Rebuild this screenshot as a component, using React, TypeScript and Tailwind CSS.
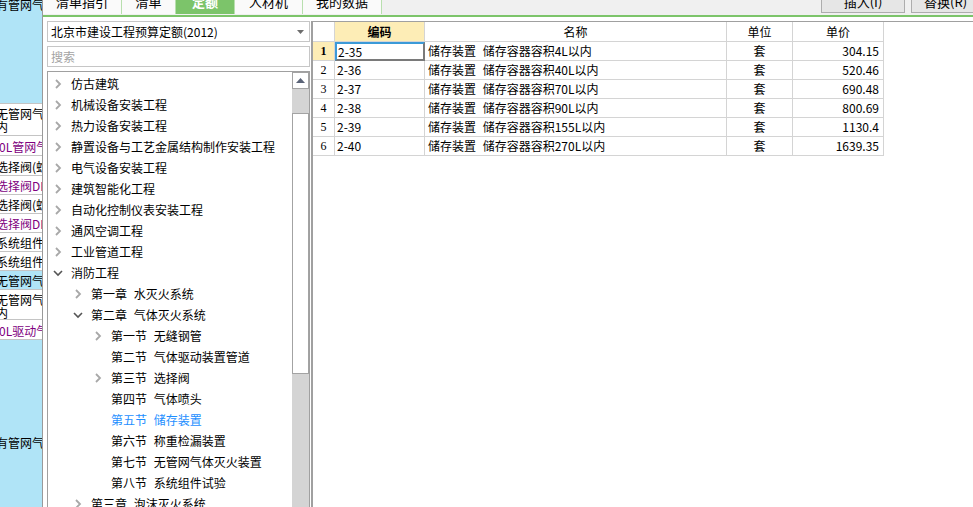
import React from 'react';

type StripRow = { lines: string[]; h: string; purple?: boolean; active?: boolean; shift: string; top?: boolean };

const stripRows: StripRow[] = [
    { lines: ['无管网气', '内'], h: 'h-[33px]', shift: '-ml-[4px]', top: true },
    { lines: ['0L管网气'], h: 'h-[20px]', purple: true, shift: '-ml-[1px]' },
    { lines: ['选择阀(蛇'], h: 'h-[20px]', shift: '-ml-[4px]' },
    { lines: ['选择阀DN'], h: 'h-[19px]', purple: true, shift: '-ml-[4px]' },
    { lines: ['选择阀(蛇'], h: 'h-[19px]', shift: '-ml-[4px]' },
    { lines: ['选择阀DN'], h: 'h-[19px]', purple: true, shift: '-ml-[4px]' },
    { lines: ['系统组件'], h: 'h-[19px]', shift: '-ml-[4px]' },
    { lines: ['系统组件'], h: 'h-[19px]', shift: '-ml-[4px]' },
    { lines: ['无管网气'], h: 'h-[19px]', active: true, shift: '-ml-[4px]' },
    { lines: ['无管网气', '内'], h: 'h-[30px]', shift: '-ml-[4px]', top: true },
    { lines: ['0L驱动气'], h: 'h-[20px]', purple: true, shift: '-ml-[1px]' },
];

type TreeItem = { label: string; level: number; icon: 'right' | 'down' | 'none'; selected?: boolean };

const treeItems: TreeItem[] = [
    { label: '仿古建筑', level: 0, icon: 'right' },
    { label: '机械设备安装工程', level: 0, icon: 'right' },
    { label: '热力设备安装工程', level: 0, icon: 'right' },
    { label: '静置设备与工艺金属结构制作安装工程', level: 0, icon: 'right' },
    { label: '电气设备安装工程', level: 0, icon: 'right' },
    { label: '建筑智能化工程', level: 0, icon: 'right' },
    { label: '自动化控制仪表安装工程', level: 0, icon: 'right' },
    { label: '通风空调工程', level: 0, icon: 'right' },
    { label: '工业管道工程', level: 0, icon: 'right' },
    { label: '消防工程', level: 0, icon: 'down' },
    { label: '第一章 水灭火系统', level: 1, icon: 'right' },
    { label: '第二章 气体灭火系统', level: 1, icon: 'down' },
    { label: '第一节 无缝钢管', level: 2, icon: 'right' },
    { label: '第二节 气体驱动装置管道', level: 2, icon: 'none' },
    { label: '第三节 选择阀', level: 2, icon: 'right' },
    { label: '第四节 气体喷头', level: 2, icon: 'none' },
    { label: '第五节 储存装置', level: 2, icon: 'none', selected: true },
    { label: '第六节 称重检漏装置', level: 2, icon: 'none' },
    { label: '第七节 无管网气体灭火装置', level: 2, icon: 'none' },
    { label: '第八节 系统组件试验', level: 2, icon: 'none' },
    { label: '第三章 泡沫灭火系统', level: 1, icon: 'right' },
];

const levelPad = ['pl-[4px]', 'pl-[24px]', 'pl-[44px]'];

const rows = [
    { no: 1, code: '2-35', name: '储存装置 储存容器容积4L以内', unit: '套', price: '304.15' },
    { no: 2, code: '2-36', name: '储存装置 储存容器容积40L以内', unit: '套', price: '520.46' },
    { no: 3, code: '2-37', name: '储存装置 储存容器容积70L以内', unit: '套', price: '690.48' },
    { no: 4, code: '2-38', name: '储存装置 储存容器容积90L以内', unit: '套', price: '800.69' },
    { no: 5, code: '2-39', name: '储存装置 储存容器容积155L以内', unit: '套', price: '1130.4' },
    { no: 6, code: '2-40', name: '储存装置 储存容器容积270L以内', unit: '套', price: '1639.35' },
];

const tabs = [
    { label: '清单指引', w: 'w-[79px]' },
    { label: '清单', w: 'w-[54px]' },
    { label: '定额', w: 'w-[59px]', active: true },
    { label: '人材机', w: 'w-[68px]' },
    { label: '我的数据', w: 'w-[79px]' },
];

const Chevron: React.FC<{ dir: 'right' | 'down' | 'none' }> = ({ dir }) => {
    if (dir === 'none') return <span className="w-[12px]" />;
    if (dir === 'right') {
        return (
            <svg width="12" height="12" viewBox="0 0 12 12">
                <path d="M4 2 L8 6 L4 10" fill="none" stroke="#a8a8a8" strokeWidth="1.8" />
            </svg>
        );
    }
    return (
        <svg width="12" height="12" viewBox="0 0 12 12">
            <path d="M2 4 L6 8 L10 4" fill="none" stroke="#555555" strokeWidth="1.6" />
        </svg>
    );
};

const LeftStrip: React.FC = () => (
    <div className="w-[43px] shrink-0 h-full flex flex-col bg-[#b0e4f7] border-r border-[#9a9a9a] overflow-hidden">
        <div className="h-[103px] shrink-0 whitespace-nowrap">
            <div className="-ml-[4px] -mt-[2px] leading-[14px]">有管网气</div>
        </div>
        {stripRows.map((r, i) => (
            <div
                key={i}
                className={`${r.h} shrink-0 flex flex-col whitespace-nowrap border-b border-[#c4c4c4] ${r.top ? 'justify-start pt-[4px]' : 'justify-center pt-[2px]'} ${i === 0 ? 'border-t' : ''} ${r.active ? 'bg-[#b0e4f7]' : 'bg-white'} ${r.purple ? 'text-[#800080]' : 'text-black'}`}
            >
                {r.lines.map((l, j) => (
                    <div key={j} className={`${r.shift} leading-[12px] ${j > 0 ? 'mt-[1px]' : ''}`}>{l}</div>
                ))}
            </div>
        ))}
        <div className="flex-1 whitespace-nowrap pt-[96px]">
            <div className="-ml-[4px] leading-[14px]">有管网气</div>
        </div>
    </div>
);

const TopBar: React.FC = () => (
    <div className="h-[17px] shrink-0 flex bg-[#f0f0f0] border-b-2 border-[#7cc46a] overflow-hidden">
        {tabs.map(t => (
            <div
                key={t.label}
                className={`${t.w} shrink-0 h-[24px] -mt-[10px] flex items-center justify-center border-r border-[#b8dfae] text-[13px] ${t.active ? 'bg-[#7cc46a] text-white font-bold' : 'bg-[#fafafa] text-black'}`}
            >
                {t.label}
            </div>
        ))}
        <div className="flex-1" />
        <div className="w-[84px] shrink-0 h-[23px] -mt-[10px] flex items-center justify-center bg-[#e6e6e6] border border-[#adadad] text-[13px]">插入(I)</div>
        <div className="w-[6px] shrink-0" />
        <div className="w-[62px] shrink-0 h-[23px] -mt-[10px] flex items-center justify-start pl-[12px] bg-[#e6e6e6] border border-r-0 border-[#adadad] text-[13px] whitespace-nowrap">替换(R)</div>
    </div>
);

const LeftPanel: React.FC = () => (
    <div className="w-[267px] shrink-0 pl-[4px] pt-[4px] flex flex-col gap-[4px] min-h-0">
        <div className="h-[21px] shrink-0 w-[263px] border border-[#c6c6c6] flex items-center pl-[3px] pr-[5px]">
            <span className="flex-1 whitespace-nowrap">北京市建设工程预算定额(2012)</span>
            <svg width="7" height="4" viewBox="0 0 7 4">
                <path d="M0 0 L7 0 L3.5 4 Z" fill="#6d6d6d" />
            </svg>
        </div>
        <div className="h-[21px] shrink-0 w-[263px] border border-[#c6c6c6] flex items-center pl-[3px] text-[#a3a3a3]">搜索</div>
        <div className="h-[460px] shrink-0 w-[263px] border border-[#a0a0a0] flex">
            <div className="flex-1 pt-[1px] flex flex-col">
                {treeItems.map((it, i) => (
                    <div key={i} className={`h-[21px] shrink-0 flex items-center ${levelPad[it.level]}`}>
                        <span className="w-[12px] flex justify-center">
                            <Chevron dir={it.icon} />
                        </span>
                        <span className={`ml-[7px] whitespace-pre [word-spacing:4px] ${it.selected ? 'text-[#1e8fff]' : 'text-black'}`}>{it.label}</span>
                    </div>
                ))}
            </div>
            <div className="w-[17px] shrink-0 flex flex-col bg-[#d4d4d4]">
                <div className="h-[17px] shrink-0 bg-white border border-[#a3a3a3] flex items-center justify-center">
                    <svg width="9" height="5" viewBox="0 0 9 5">
                        <path d="M0 5 L4.5 0 L9 5 Z" fill="#5b6478" />
                    </svg>
                </div>
                <div className="h-[24px] shrink-0" />
                <div className="h-[261px] shrink-0 bg-white border border-[#a3a3a3]" />
            </div>
        </div>
    </div>
);

const DataTable: React.FC = () => (
    <div className="flex-1 ml-[1px] mt-[4px] border-t border-l-2 border-[#a0a0a0] bg-white">
        <div className="flex h-[20px] border-b border-[#d4d4d4] w-max">
            <div className="w-[22px] border-r border-[#d4d4d4]" />
            <div className="w-[90px] border-r border-[#d4d4d4] bg-[#fdedb6] flex items-center justify-center font-bold">编码</div>
            <div className="w-[302px] border-r border-[#d4d4d4] flex items-center justify-center">名称</div>
            <div className="w-[66px] border-r border-[#d4d4d4] flex items-center justify-center">单位</div>
            <div className="w-[91px] border-r border-[#d4d4d4] flex items-center justify-center">单价</div>
        </div>
        {rows.map(r => {
            const sel = r.no === 1;
            return (
                <div key={r.no} className="flex h-[19px] border-b border-[#d4d4d4] w-max">
                    <div className={`w-[22px] border-r border-[#d4d4d4] flex items-center justify-center font-['Liberation_Serif'] ${sel ? 'bg-[#fdedb6] font-bold' : ''}`}>{r.no}</div>
                    <div className={`w-[90px] flex items-center pl-[1px] ${sel ? 'border-2 border-t-[#3b9ad8] border-l-[#3b9ad8] border-r-[#7a7a7a] border-b-[#7a7a7a] -mb-[1px] h-[19px]' : 'border-r border-[#d4d4d4] pl-[2px]'}`}>{r.code}</div>
                    <div className="w-[302px] border-r border-[#d4d4d4] flex items-center pl-[3px] whitespace-pre [word-spacing:4px]">{r.name}</div>
                    <div className="w-[66px] border-r border-[#d4d4d4] flex items-center justify-center">{r.unit}</div>
                    <div className="w-[91px] border-r border-[#d4d4d4] flex items-center justify-end pr-[4px]">{r.price}</div>
                </div>
            );
        })}
    </div>
);

const App: React.FC = () => {
    return (
        <div className="w-[973px] h-[507px] overflow-hidden flex bg-white text-[12px] leading-[14px] text-black font-['Noto_Sans_CJK_SC','Noto_Sans',sans-serif]">
            <LeftStrip />
            <div className="flex-1 flex flex-col min-w-0">
                <TopBar />
                <div className="flex flex-1 min-h-0">
                    <LeftPanel />
                    <DataTable />
                </div>
            </div>
        </div>
    );
};

export default App;
